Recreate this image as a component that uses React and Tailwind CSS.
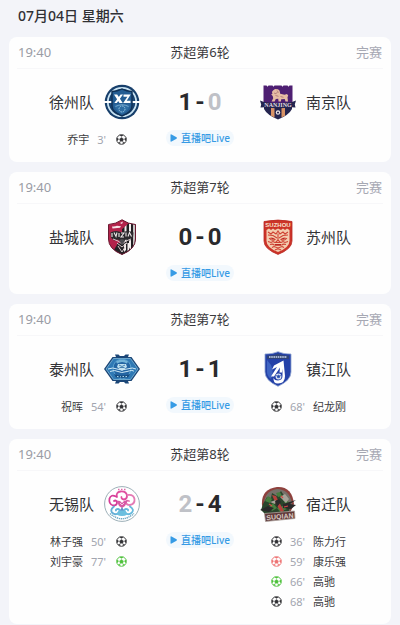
import React from "react";

const matches = [
  {
    id: 1,
    time: "19:40",
    round: "苏超第6轮",
    status: "完赛",
    home: { name: "徐州队", score: 1, Logo: XuzhouLogo, goals: [{ player: "乔宇", minute: "3'", type: "goal" }] },
    away: { name: "南京队", score: 0, Logo: NanjingLogo, goals: [] },
  },
  {
    id: 2,
    time: "19:40",
    round: "苏超第7轮",
    status: "完赛",
    home: { name: "盐城队", score: 0, Logo: YanchengLogo, goals: [] },
    away: { name: "苏州队", score: 0, Logo: SuzhouLogo, goals: [] },
  },
  {
    id: 3,
    time: "19:40",
    round: "苏超第7轮",
    status: "完赛",
    home: { name: "泰州队", score: 1, Logo: TaizhouLogo, goals: [{ player: "祝晖", minute: "54'", type: "goal" }] },
    away: { name: "镇江队", score: 1, Logo: ZhenjiangLogo, goals: [{ player: "纪龙刚", minute: "68'", type: "goal" }] },
  },
  {
    id: 4,
    time: "19:40",
    round: "苏超第8轮",
    status: "完赛",
    home: {
      name: "无锡队",
      score: 2,
      Logo: WuxiLogo,
      goals: [
        { player: "林子强", minute: "50'", type: "goal" },
        { player: "刘宇豪", minute: "77'", type: "penalty" },
      ],
    },
    away: {
      name: "宿迁队",
      score: 4,
      Logo: SuqianLogo,
      goals: [
        { player: "陈力行", minute: "36'", type: "goal" },
        { player: "康乐强", minute: "59'", type: "own" },
        { player: "高驰", minute: "66'", type: "penalty" },
        { player: "高驰", minute: "68'", type: "goal" },
      ],
    },
  },
];

const ballColors = {
  goal: "text-[#333336]",
  penalty: "text-[#4fc23c]",
  own: "text-[#ee7474]",
};

function XuzhouLogo() {
  return (
    <svg viewBox="0 0 36 36" className="size-9 shrink-0" aria-hidden="true">
      <circle cx="18" cy="18" r="17.3" fill="#173f6b" />
      <circle cx="18" cy="18" r="14.2" fill="none" stroke="#c9e3f2" strokeWidth="1.8" />
      <circle cx="18" cy="18" r="12" fill="#1c4c7d" />
      <path d="M0 17h8v2H0zM28 17h8v2h-8z" fill="#fff" />
      <path d="M8 7.500q5.500 0 10-2.500 4.500 2.500 10 2.500V22q0 6-10 10Q8 28 8 22z" fill="#245d93" stroke="#0f3055" strokeWidth="1.400" />
      <path d="M10.500 20.500h15v2q-2 5-7.500 7.500-5.500-2.500-7.500-7.500z" fill="#2e6da3" />
      <circle cx="18" cy="25" r="3" fill="none" stroke="#9cc8e4" strokeWidth="1" strokeDasharray="1.500 .8" />
      <path d="M11.500 22.500q6.500-3.500 13 0" fill="none" stroke="#8bbadb" strokeWidth=".8" />
      <path d="M10 10.500h3.200l5.500 8.500h-3.200zM16.600 10.500H19l-6.200 8.500h-2.500zM19.500 10.500h7.200l-4 6.300h3.800V19h-7.300l4.200-6.300h-3.900z" fill="#fff" />
    </svg>
  );
}

function NanjingLogo() {
  return (
    <svg viewBox="0 0 36 36" className="size-9 shrink-0" aria-hidden="true">
      <path d="M3.500 1.500h3l1 1.200 1-1.200h4l1 1.200 1-1.200h7l1 1.200 1-1.200h4l1 1.200 1-1.200h3V19h-29z" fill="#4e1f72" />
      <path d="M4 22h28v3q-3 6-14 10.500Q7 31 4 25z" fill="#24244f" />
      <path d="M11 23h3.500v10.500L11 31.700zM21.500 23H25v8.700l-3.500 1.800z" fill="#d99366" />
      <path d="M13 6.500 15 5l3 .3 1.600 1.400.6 3 4.300 1 2.500-.7 1.200 1.500-.7 1.700.5 4.300h-2.500l-.8-2.500-3.500.3-.3 2.200h-2.300l-.4-2.700-2.400.2-1.200 2.500h-3l1.600-3.200-.5-2.200-1.500-1.500 1.300-1-.6-1.500z" fill="#e6bca4" />
      <path d="m14 9 2 .8 1.500-1.800M15.500 11.500l3 .8M20.500 12.500l3 .8M17 6.500l1.500 2" fill="none" stroke="#a2676c" strokeWidth=".7" />
      <path d="M0 16.500 4 18q14 2 28 0l4-1.500-1.200 4 .7 3-4-.2q-13.500 2-27 0l-4 .2.7-3z" fill="#242550" />
      <text x="18" y="23" textAnchor="middle" className="font-['Liberation_Serif',serif] text-[6px] font-bold" fill="#e6dce3">NANJING</text>
      <circle cx="18" cy="28.500" r="2.200" fill="#f0e7e5" />
      <path d="m18 27.400 1.100.8-.4 1.300h-1.400l-.4-1.300z" fill="#24244f" />
    </svg>
  );
}

function YanchengLogo() {
  return (
    <svg viewBox="0 0 36 36" className="size-9 shrink-0" aria-hidden="true">
      <clipPath id="yancheng-shield">
        <path d="M4.500 5.500Q12 5 18 .8q6 4.200 13.500 4.700V20q0 10-13.500 15.500Q4.500 30 4.500 20z" />
      </clipPath>
      <g clipPath="url(#yancheng-shield)">
        <path d="M4 0h28v36H4z" fill="#b3234b" />
        <path d="M18 0h14v36H18z" fill="#201e22" />
        <path d="M20.500 0h2v36h-2zM25 0h2v36h-2zM29.200 0h1.600v36h-1.600z" fill="#f4eeee" />
        <path d="M18 0 25 4l-9 8z" fill="#b3234b" />
        <path d="m14 24 8-1 5 9-9 5-8-6z" fill="#242125" />
        <path d="m20 25 2-1v7l-2 2zM23.500 24h1.500v7l-1.500 1z" fill="#f4eeee" />
      </g>
      <path d="M4.500 5.500Q12 5 18 .8q6 4.200 13.500 4.700V20q0 10-13.500 15.500Q4.500 30 4.500 20z" fill="none" stroke="#6b1b32" strokeWidth="1" />
      <path d="M8 7.500q3 .3 5-.7l4 .5-1 1.500-7.500.6zM16 4l3-1.500L18 5z" fill="#f6e4e8" />
      <path d="M6.500 13.500q5-3 11.500 0 6-3 11.500 0l-.5 5-3 3-4-1-4 3-4-3-4 1-3-3z" fill="#2b292d" />
      <path d="M8 14v4M10 13.500l2 4 1-4M15 14v4M17 14h3l-3 4h3M22 13.500v4M24 17.500l1.500-4 2 4" fill="none" stroke="#eee7e8" strokeWidth="1.100" />
      <path d="m9 20 5 2 4 3 4-3 5-2M13 24l5 4 5-4M14 27l4 6 3-5" fill="none" stroke="#d9cacd" strokeWidth="1" />
      <path d="m15 21 3-1 3 1-3 5z" fill="#4c4b50" />
    </svg>
  );
}

function SuzhouLogo() {
  return (
    <svg viewBox="0 0 36 36" className="size-9 shrink-0" aria-hidden="true">
      <path d="M4 2.500Q18-.4 32 2.500V22q0 8-14 13.400Q4 30 4 22z" fill="#cc3328" stroke="#b92c24" strokeWidth=".8" />
      <path d="M6.500 11 9 9.500l2 1.500 2-1.500 2 1.500 3-1.500 3 1.500 2-1.500 2 1.500 2-1.500 2.500 1.500v11q0 6.500-11.500 11Q6.500 28.500 6.500 22z" fill="#f3cdb0" />
      <text x="18" y="8" textAnchor="middle" className="font-['Liberation_Sans',sans-serif] text-[6px] font-bold" fill="#f9e3cf">SUZHOU</text>
      <g fill="none" stroke="#cf4334" strokeWidth="1.100">
        <path d="m8 13 3 2 2-2 3 2 2-3 2 3 3-2 2 2 3-2M8 16l5 .5 4 2.500M28 16l-5 .5-4 2.500" />
        <path d="M9.500 19.500q3-1.500 5.500 1-3 2-5.500-1zM26.500 19.500q-3-1.500-5.500 1 3 2 5.500-1z" />
        <path d="M18 14.500V21l-2.500 2.500h5L18 21M8 22.500l3 1 2-1 2 1M28 22.500l-3 1-2-1-2 1" />
        <path d="M10 25.500q3-1 4 .5h8q1-1.500 4-.5M12 28.500l2-1 4 1.500 4-1.500 2 1M15 31q3-2 6 0" />
      </g>
      <path d="M15 25h6v1.500h-6zM11.500 19h2v1.500h-2zM22.500 19h2v1.500h-2z" fill="#b92a22" />
    </svg>
  );
}

function TaizhouLogo() {
  return (
    <svg viewBox="0 0 36 36" className="size-9 shrink-0" aria-hidden="true">
      <path d="m0 18 8.500-12H12L11 3.500h3.500L16 5h4l1.500-1.500H25L24 6h3.500L36 18l-8.500 12H24l1 2.500h-3.500L20 31h-4l-1.500 1.500H11l1-2.500H8.500z" fill="#1b4677" />
      <path d="M2 18 9.500 7.500h17L34 18l-7.500 10.500h-17z" fill="#2f79b5" stroke="#8cc6e2" strokeWidth=".7" />
      <path d="M9 18q0-9 9-10 9 1 9 10-2 9-9 10-7-1-9-10z" fill="#2365a3" stroke="#62a8d3" strokeWidth=".8" />
      <path d="M12 10.500q6-4 12 0l-1 2q-5-3-10 0z" fill="#72b3d8" />
      <path d="M14 13h8l1 3-5 4-5-4z" fill="#bfe0ef" />
      <path d="m15 14 3 1.500 3-1.500M15.500 16.500h5" fill="none" stroke="#25669e" strokeWidth=".8" />
      <path d="M4 18q5-2 9 0t10 0 9 0M6 20.500q5-2 8 0t9 0 7 0" fill="none" stroke="#cfeaf6" strokeWidth="1" />
      <path d="m10 23 2 3.500h12l2-3.500q-8 3-16 0z" fill="#164a7d" />
      <path d="M13 25.500h1.500M16 25.700h1M18.500 25.500H20M21.500 25.500H23" stroke="#a9d5ea" strokeWidth="1.100" />
    </svg>
  );
}

function ZhenjiangLogo() {
  return (
    <svg viewBox="0 0 36 36" className="size-9 shrink-0" aria-hidden="true">
      <path d="M5 3Q13 3 18 .7 23 3 31 3v18q0 8.500-13 14.300Q5 29.500 5 21z" fill="#2441a8" stroke="#8fa5d0" strokeWidth=".8" />
      <path d="M7 4.500q7 0 11-2 4 2 11 2V8H7z" fill="#304477" />
      <path d="M9 6h18" stroke="#c9d5eb" strokeWidth="1.300" strokeDasharray="1.600 .6" />
      <path d="M7 9q9 9 4 19-4-3-4-7z" fill="#3f64c2" />
      <path d="M23.500 9.500 14 14.500l-2 4 5-2.500-6 9.500h3l6-9-.5 5h2.500l.5-4V25q0 4-4.500 4.500-3.500 0-4.500-2.500-.5 5.500 4.500 5.500 7 0 7-7.500z" fill="#fff" />
      <circle cx="18.500" cy="25.500" r="2.900" fill="#dfe8f6" />
      <path d="m18.500 24 1.500 1.100-.6 1.700h-1.800l-.6-1.700zM16 24.500h1M20 24.500h1" fill="#264cad" stroke="#264cad" strokeWidth=".6" />
    </svg>
  );
}

function WuxiLogo() {
  return (
    <svg viewBox="0 0 36 36" className="size-9 shrink-0" aria-hidden="true">
      <circle cx="18" cy="18" r="17.400" fill="#fff" stroke="#839ba5" strokeWidth=".8" />
      <path d="M14 3.500h1.500M17 3.300h1.500M20 3.500h1.500" stroke="#db67a9" strokeWidth="1.300" />
      <path d="M6 27.500q12 10.500 24 0" fill="none" stroke="#6da7c2" strokeWidth="1.400" strokeDasharray="1.300 .7" />
      <g fill="none" strokeWidth="1.800" strokeLinecap="round">
        <path d="M13 11q-1.500-4.500 3.500-5.500 6-.5 6.500 4.500 0 3-3 3.500-3-.5-2.500-2.500" stroke="#df4f9f" />
        <path d="M23.500 9q6-1 7 4 .5 5-4.500 6-4 0-4-3 1-2 3-1" stroke="#e47bb5" />
        <path d="M12 10.500q-5-2.500-6.500 2Q4.500 18 9 19.500q4 0 4-3-1-3-3-1.500" stroke="#d63d99" />
        <path d="M10 20.500q-4 3-2 6 4 3.500 7 0 1.500-3-1-3.500-2.500 0-2 1.500" stroke="#64afd7" />
        <path d="M26 20.500q4.500 3 2 6-4 3.500-7 0-1.500-3 1-3.500 2.500 0 2 1.500" stroke="#66b9dc" />
      </g>
      <path d="m12.500 14.500 3.500.5 2 2 2-2 4-1-3 6-3 2-3-2z" fill="#d85aa5" />
      <path d="m16 17 2 2 2-2" fill="none" stroke="#f8d6e9" strokeWidth=".9" />
      <path d="M12.500 28.500q1-3.500 5.500-6 4.500 2.500 5.500 6-5.500 3-11 0z" fill="#6bbfdf" />
      <path d="m18 21 2 3.500h-4z" fill="#638fc6" />
    </svg>
  );
}

function SuqianLogo() {
  return (
    <svg viewBox="0 0 36 36" className="size-9 shrink-0" aria-hidden="true">
      <path d="M2 19Q1 3 17 1q15-1 17 17l-4 9-25 2z" fill="#8e413d" />
      <path d="M4 19Q4 5 17 3q12 0 15 14l-3 9-22 2z" fill="#77716a" />
      <path d="m3 18 4-7 4 1 1-5 5 3 4-5 4 6-2 3 4 4-4 2 7 2-2 5-23 1-4-4z" fill="#29452c" />
      <path d="m5 15 3-5 4 3-2 4zM16 7l4-1 2 4-4 1zM24 14l4 1 3 6-6-2zM9 21l4-4 4 5-5 3zM17 22l6-2 4 3-7 3z" fill="#477e3f" />
      <path d="m12 9 4 1 3 6 5 9-3 1-5-8z" fill="#b7413d" />
      <path d="m20 11 5-3 4 5-3 4zM10 16l6-2-1 4z" fill="#a8a49a" />
      <path d="m0 24 8-4 6 2-5 4zM23 18l13-4-6 4 6 1-5 4-8-1zM15 15l4-2 2 3-4 5z" fill="#29292a" />
      <path d="m9 18 3 2M21 10l2 2M24 21l4-1" stroke="#d34c46" strokeWidth="1.200" />
      <path d="m4.500 27.500 30-2.500.5 7.500-29.500 3z" fill="#613939" stroke="#aaa09a" strokeWidth=".8" />
      <text x="20" y="33" textAnchor="middle" transform="rotate(-5 20 31)" className="font-['Liberation_Sans',sans-serif] text-[7px] font-bold" fill="#d6c8c1">SUQIAN</text>
    </svg>
  );
}

function BallIcon({ type }) {
  return (
    <svg viewBox="0 0 20 20" className={`size-[11px] shrink-0 ${ballColors[type]}`} fill="none" stroke="currentColor" aria-hidden="true">
      <circle cx="10" cy="10" r="8.800" strokeWidth="1.600" />
      <path d="m10 6.500 3.500 2.500-1.300 4H7.800L6.500 9z" fill="currentColor" strokeWidth=".8" />
      <path d="M12 13l2 3M8 13l-2 3" strokeWidth="1" />
      <path d="M6.500 1.800h7L10 4.500zM18.500 7l-.5 5.500-3-3.500zM1.500 7l.5 5.500L5 9zM12.500 15.500h3.500l-3.500 2.500zM7.500 15.500H4L7.500 18z" fill="currentColor" strokeWidth=".5" />
    </svg>
  );
}

function GoalList({ goals, away }) {
  return (
    <ul className={`flex flex-col gap-px text-[11px] leading-[19px] ${away ? "pl-[11px]" : "pr-[13px]"}`}>
      {goals.map((goal, index) => (
        <li key={index} className={`flex items-center ${away ? "flex-row-reverse justify-end gap-2" : "justify-end gap-2"}`}>
          <span className="text-[#3c3c40]">{goal.player}</span>
          <span className="text-[#a2a5af]">{goal.minute}</span>
          <span className={away ? "flex" : "flex pl-0.5"}>
            <BallIcon type={goal.type} />
          </span>
        </li>
      ))}
    </ul>
  );
}

function Score({ home, away }) {
  return (
    <div className="flex h-9 items-center justify-center gap-[3px] font-['Roboto',sans-serif] text-2xl font-bold leading-9 text-[#29292c]">
      <span className={home < away ? "text-[#bfc1c7]" : ""}>{home}</span>
      <span>-</span>
      <span className={away < home ? "text-[#bfc1c7]" : ""}>{away}</span>
    </div>
  );
}

function MatchCard({ match }) {
  const { home, away } = match;

  return (
    <article className="rounded-lg bg-[#fefefe] pb-[13px]">
      <header className="mx-2 grid h-8 grid-cols-3 items-center border-b border-[#f7f7f9] px-px text-[13px]">
        <time className="text-[#9a9ca5]">{match.time}</time>
        <h2 className="text-center text-[#3a3a3d]">{match.round}</h2>
        <span className="text-right text-[#a6a8b3]">{match.status}</span>
      </header>

      <div className="grid grid-cols-[1fr_120px_1fr] pt-[15px]">
        <div className="flex flex-col gap-2.5">
          <div className="flex items-center justify-end gap-2.5">
            <span className="text-[15px] text-[#333336]">{home.name}</span>
            <home.Logo />
          </div>
          <GoalList goals={home.goals} />
        </div>

        <div className="flex flex-col items-center gap-2.5">
          <Score home={home.score} away={away.score} />
          <a href="#live" className="flex h-4 items-center gap-1 rounded-full bg-[#f2f8fd] px-1 text-[10px] font-medium leading-4 text-[#369be5]">
            <svg viewBox="0 0 7 8" className="h-2 w-[7px]" fill="currentColor" aria-hidden="true">
              <path d="M.5 1Q.5 0 1.500.5l5 2.800q.8.700 0 1.400l-5 2.800Q.5 8 .5 7z" />
            </svg>
            直播吧Live
          </a>
        </div>

        <div className="flex flex-col gap-2.5">
          <div className="flex items-center gap-2.5">
            <away.Logo />
            <span className="text-[15px] text-[#333336]">{away.name}</span>
          </div>
          <GoalList goals={away.goals} away />
        </div>
      </div>
    </article>
  );
}

export default function App() {
  return (
    <main className="min-h-screen bg-[#f3f4f9] px-[9px] font-['Noto_Sans','Noto_Sans_CJK_SC',sans-serif]">
      <h1 className="px-[9px] pt-1.5 pb-[11px] text-sm font-medium leading-5 text-[#303034]">07月04日 星期六</h1>
      <div className="flex flex-col gap-2.5">
        {matches.map((match) => (
          <MatchCard key={match.id} match={match} />
        ))}
      </div>
    </main>
  );
}
